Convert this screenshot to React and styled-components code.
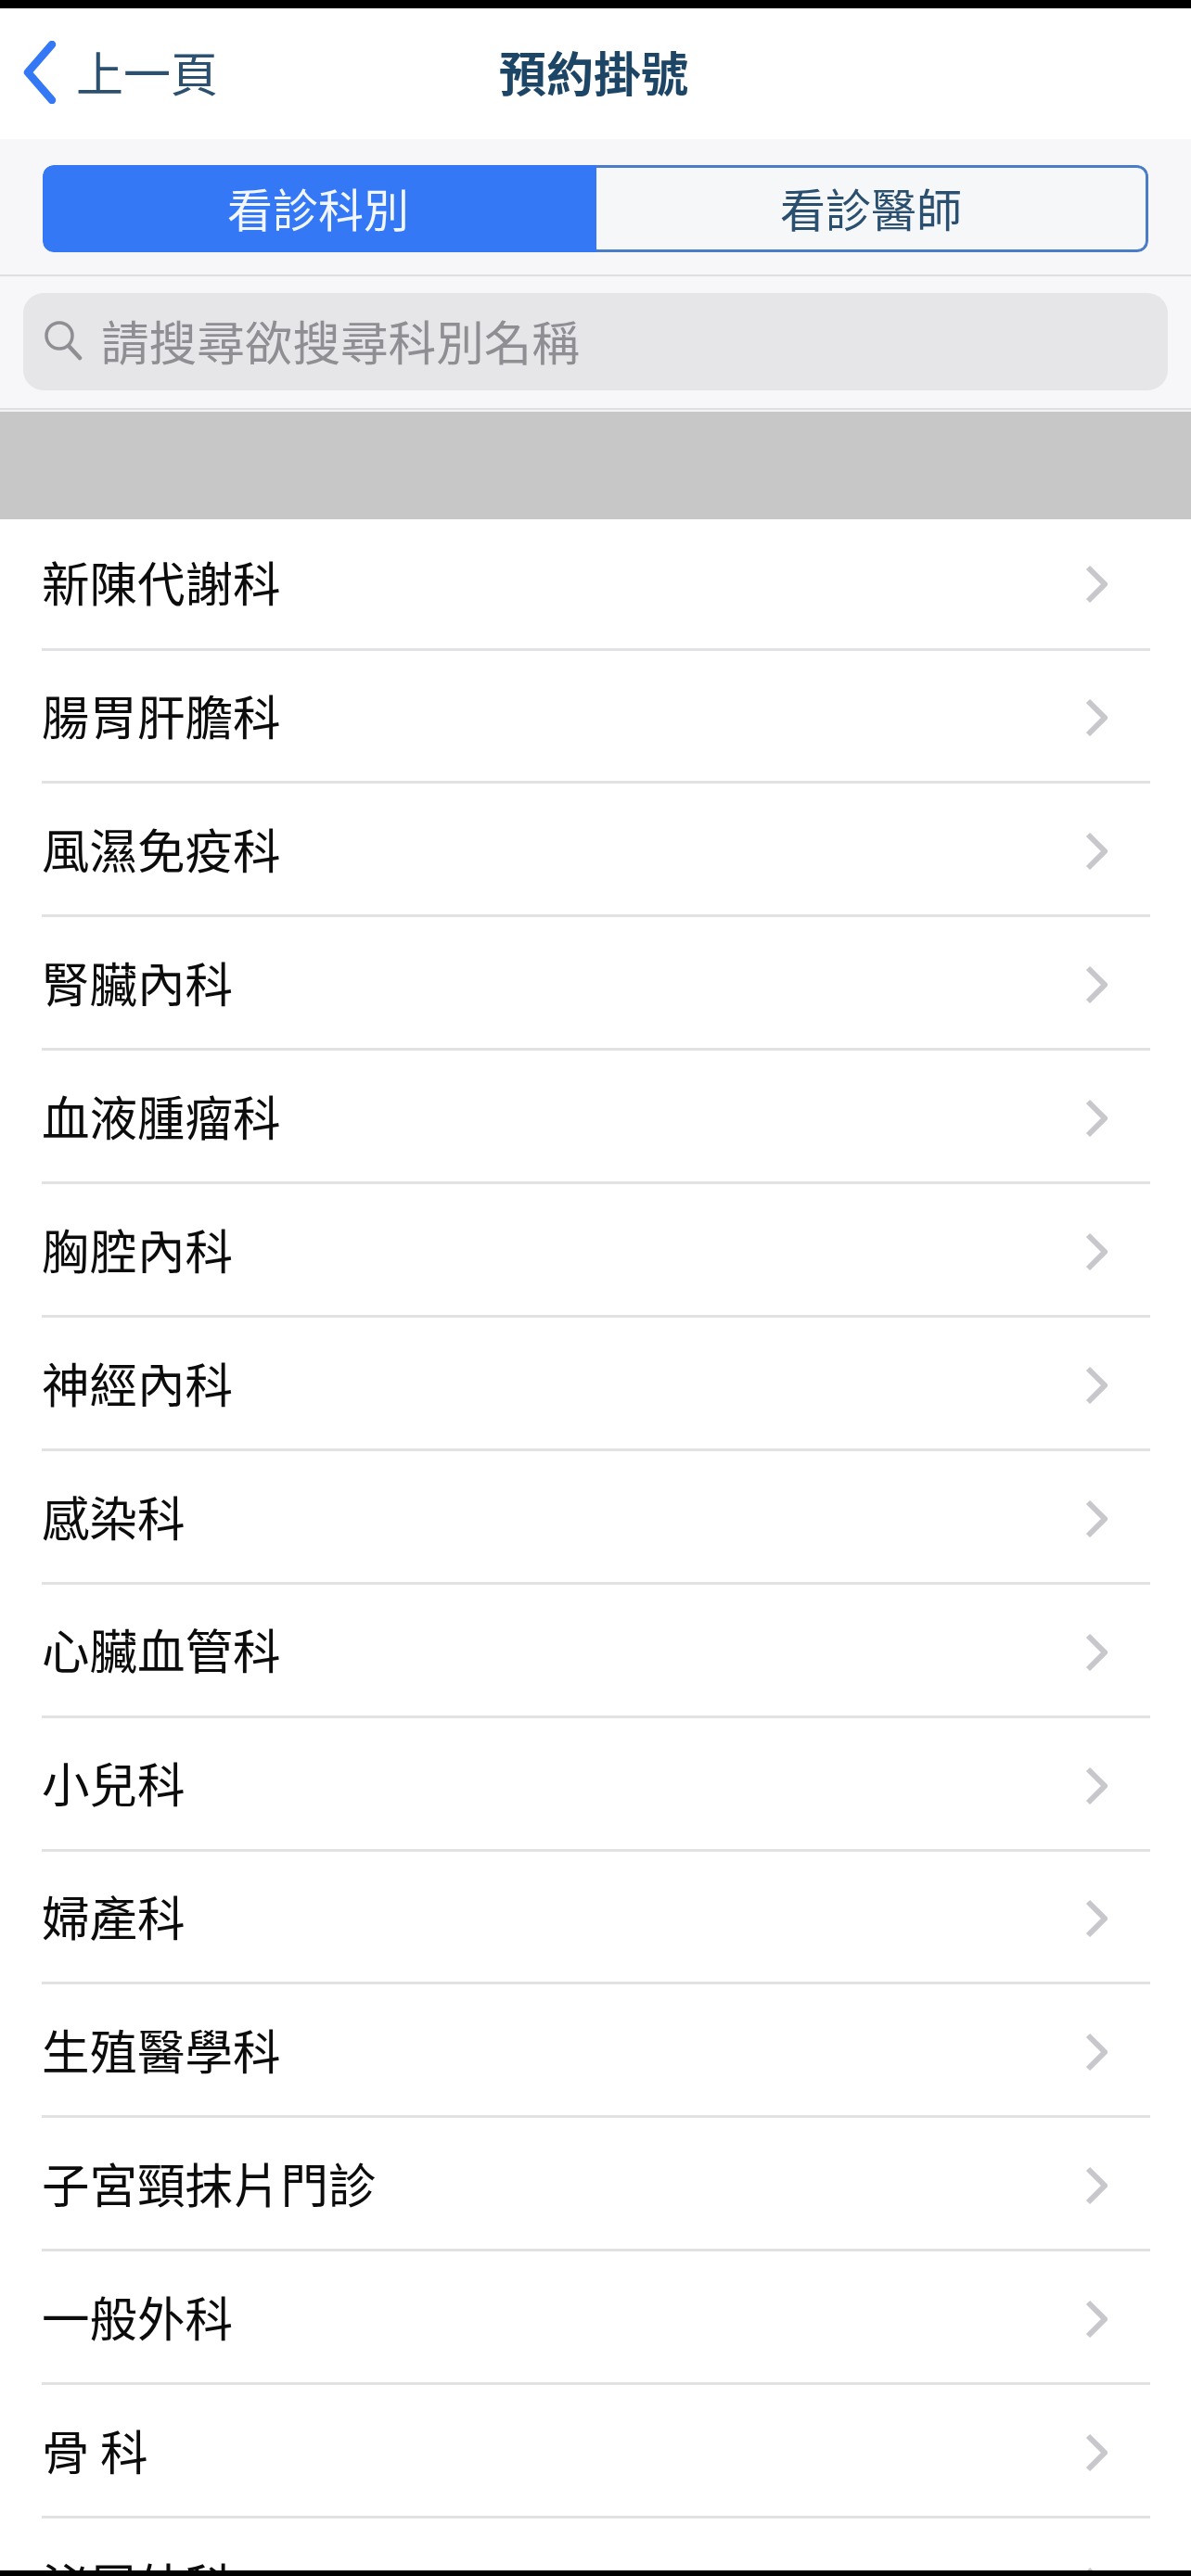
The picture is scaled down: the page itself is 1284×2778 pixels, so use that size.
import React from 'react';
import styled, { createGlobalStyle } from 'styled-components';

const GlobalStyle = createGlobalStyle`
	html, body {
		margin: 0;
		padding: 0;
		background: #fff;
	}
	* {
		box-sizing: border-box;
	}
`;

const Screen = styled.div`
	width: 1284px;
	height: 2778px;
	display: flex;
	flex-direction: column;
	overflow: hidden;
	background: #fff;
	font-family: 'Noto Sans CJK TC', 'Noto Sans', sans-serif;
`;

const EdgeBar = styled.div`
	flex: none;
	height: ${(p) => p.$height}px;
	background: #000;
`;

const NavBar = styled.header`
	flex: none;
	height: 141px;
	display: grid;
	grid-template-columns: 1fr auto 1fr;
	align-items: center;
	padding: 0 25px 4px;
	background: #fff;
`;

const BackLink = styled.div`
	display: flex;
	align-items: center;
	gap: 21px;
	font-size: 51px;
	line-height: 1;
	color: #2b5070;
`;

const Title = styled.h1`
	margin: 0 0 0 -4px;
	font-size: 51px;
	line-height: 1;
	font-weight: 700;
	color: #1c4566;
`;

const TabsBar = styled.div`
	flex: none;
	height: 148px;
	padding: 28px 46px 0;
	background: #f7f7f9;
	border-bottom: 2px solid #dedee0;
`;

const Tabs = styled.div`
	height: 94px;
	display: grid;
	grid-template-columns: 597px 1fr;
	border-radius: 12px;
	overflow: hidden;
`;

const Tab = styled.div`
	display: flex;
	align-items: center;
	justify-content: center;
	padding: 0 ${(p) => (p.$active ? 3 : 0)}px 3px 0;
	font-size: 49px;
	line-height: 1;
	background: ${(p) => (p.$active ? '#3478f6' : '#f6f7f9')};
	color: ${(p) => (p.$active ? '#f2f6fe' : '#2b4f6e')};
	border: ${(p) => (p.$active ? '0' : '3px solid #4a7cc8')};
	border-left: 0;
	border-radius: ${(p) => (p.$active ? '12px 0 0 12px' : '0 12px 12px 0')};
`;

const SearchBar = styled.div`
	flex: none;
	height: 146px;
	padding: 18px 25px 0;
	background: #f7f7f9;
	box-shadow: inset 0 -2px 0 #f3f3f5, inset 0 -4px 0 #e0e0e3;
`;

const SearchField = styled.div`
	height: 105px;
	display: flex;
	align-items: center;
	gap: 20px;
	padding: 0 0 3px 22px;
	border-radius: 22px;
	background: #e6e6e9;
	font-size: 51.6px;
	line-height: 1;
	color: #8e8e93;
`;

const Banner = styled.div`
	flex: none;
	height: 116px;
	background: #c7c7c7;
`;

const List = styled.ul`
	flex: 1;
	min-height: 0;
	margin: 0;
	padding: 0 44px 0 45px;
	list-style: none;
	overflow: hidden;
`;

const Row = styled.li`
	height: ${(p) => (p.$first ? 141.5 : 143.9)}px;
	display: flex;
	align-items: center;
	justify-content: space-between;
	padding-bottom: ${(p) => (p.$first ? 5 : 2)}px;
	padding-right: 46px;
	border-bottom: 3px solid #e2e2e4;
	font-size: 51.5px;
	line-height: 1;
	color: #0c0c0c;
`;

const ChevronSlot = styled.span`
	display: flex;
	margin-top: 7px;
`;

const BackChevron = () => (
	<svg width="36" height="68" viewBox="0 0 36 68" fill="none">
		<polyline points="31,4 5,34 31,64" stroke="#3478f6" strokeWidth="8.5" strokeLinecap="round" strokeLinejoin="round" />
	</svg>
);

const SearchIcon = () => (
	<svg width="42" height="44" viewBox="0 0 42 44" fill="none" stroke="#8e8e93" strokeWidth="3.5" strokeLinecap="round">
		<circle cx="17" cy="17" r="14" />
		<line x1="27" y1="28" x2="39" y2="41" strokeWidth="4.5" />
	</svg>
);

const RowChevron = () => (
	<svg width="24" height="42" viewBox="0 0 24 42" fill="none">
		<polyline points="3,3 21,21 3,39" stroke="#c7c7cc" strokeWidth="6" strokeLinejoin="miter" />
	</svg>
);

const departments = [
	'新陳代謝科',
	'腸胃肝膽科',
	'風濕免疫科',
	'腎臟內科',
	'血液腫瘤科',
	'胸腔內科',
	'神經內科',
	'感染科',
	'心臟血管科',
	'小兒科',
	'婦產科',
	'生殖醫學科',
	'子宮頸抹片門診',
	'一般外科',
	'骨 科',
	'泌尿外科',
];

const App = () => {
	return (
		<Screen>
			<GlobalStyle />
			<EdgeBar $height={9} />
			<NavBar>
				<BackLink>
					<BackChevron />
					<span>上一頁</span>
				</BackLink>
				<Title>預約掛號</Title>
			</NavBar>
			<TabsBar>
				<Tabs>
					<Tab $active>看診科別</Tab>
					<Tab>看診醫師</Tab>
				</Tabs>
			</TabsBar>
			<SearchBar>
				<SearchField>
					<SearchIcon />
					<span>請搜尋欲搜尋科別名稱</span>
				</SearchField>
			</SearchBar>
			<Banner />
			<List>
				{departments.map((name, i) => (
					<Row key={name} $first={i === 0}>
						<span>{name}</span>
						<ChevronSlot>
							<RowChevron />
						</ChevronSlot>
					</Row>
				))}
			</List>
			<EdgeBar $height={6} />
		</Screen>
	);
};

export default App;
